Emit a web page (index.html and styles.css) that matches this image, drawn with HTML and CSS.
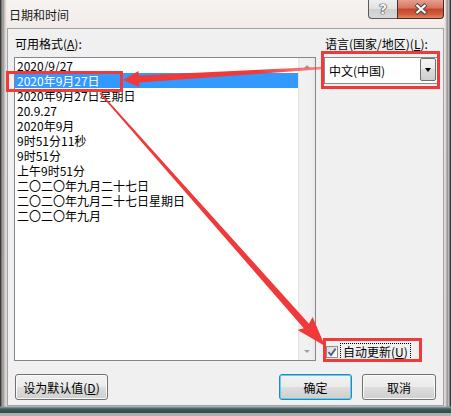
FILE: index.html
```html
<!DOCTYPE html>
<html lang="zh-CN">
<head>
<meta charset="utf-8">
<title>日期和时间</title>
<link rel="stylesheet" href="styles.css">
</head>
<body>
<div class="window">
  <div class="titlebar">
    <div class="title">日期和时间</div>
    <div class="caption">
      <div class="cap-help"><span class="q">?</span></div>
      <div class="cap-close">
        <svg width="16" height="12" viewBox="0 0 16 12"><path d="M3 1.5 L13 10.5 M13 1.5 L3 10.5" fill="none" stroke="#4a4a4a" stroke-width="4.2"/><path d="M3.5 2 L12.5 10 M12.5 2 L3.5 10" fill="none" stroke="#ffffff" stroke-width="2.2"/></svg>
      </div>
    </div>
  </div>
  <div class="client">
    <div class="main">
      <div class="col-left">
        <div class="label">可用格式(<u>A</u>):</div>
        <div class="listbox">
          <div class="items">
            <div class="item">2020/9/27</div>
            <div class="item selected">2020年9月27日</div>
            <div class="item">2020年9月27日星期日</div>
            <div class="item">20.9.27</div>
            <div class="item">2020年9月</div>
            <div class="item">9时51分11秒</div>
            <div class="item">9时51分</div>
            <div class="item">上午9时51分</div>
            <div class="item">二〇二〇年九月二十七日</div>
            <div class="item">二〇二〇年九月二十七日星期日</div>
            <div class="item">二〇二〇年九月</div>
          </div>
          <div class="scrollbar">
            <div class="sb-btn"><span class="tri-up"></span></div>
            <div class="sb-btn"><span class="tri-down"></span></div>
          </div>
        </div>
      </div>
      <div class="col-right">
        <div class="label">语言(国家/地区)(<u>L</u>):</div>
        <div class="combo">
          <div class="combo-text">中文(中国)</div>
          <div class="combo-btn"><span class="tri-black"></span></div>
        </div>
        <div class="check-row">
          <div class="checkbox">
            <svg width="10" height="10" viewBox="0 0 10 10"><path d="M1.5 5.2 L4 8 L8.6 1.6" fill="none" stroke="#4d6185" stroke-width="1.8"/></svg>
          </div>
          <div class="check-label">自动更新(<u>U</u>)</div>
        </div>
      </div>
    </div>
    <div class="bottom">
      <div class="btn btn-default">设为默认值(<u>D</u>)</div>
      <div class="btn-group">
        <div class="btn btn-ok">确定</div>
        <div class="btn btn-cancel">取消</div>
      </div>
    </div>
  </div>
  <svg class="annot" width="451" height="416" viewBox="0 0 451 416">
    <defs>
      <linearGradient id="g1" x1="322" y1="0" x2="139" y2="0" gradientUnits="userSpaceOnUse">
        <stop offset="0" stop-color="#f03a3a" stop-opacity="0.55"/>
        <stop offset="0.35" stop-color="#f03a3a" stop-opacity="1"/>
        <stop offset="1" stop-color="#f03a3a" stop-opacity="1"/>
      </linearGradient>
    </defs>
    <rect x="7.5" y="72.5" width="114" height="18" fill="none" stroke="#f03a3a" stroke-width="3"/>
    <rect x="322.5" y="52.5" width="116" height="35" fill="none" stroke="#f03a3a" stroke-width="3"/>
    <rect x="324.5" y="339.5" width="96" height="21" fill="none" stroke="#f03a3a" stroke-width="3"/>
    <polygon fill="url(#g1)" points="322,66.8 138.8,75.6 138.5,71 123,80 139.5,87.3 139.2,82.6 322,69.2"/>
    <polygon fill="#f03a3a" points="99.4,93.5 303.8,328.3 297.6,330.1 325,346 312.6,316.9 309,323.7 100.6,92.5"/>
  </svg>
</div>
</body>
</html>
```

FILE: styles.css
```css
* { box-sizing: border-box; }
html, body { margin: 0; padding: 0; }
body {
  width: 451px;
  height: 416px;
  overflow: hidden;
  font-family: "Noto Sans CJK SC", "Microsoft YaHei", sans-serif;
  font-size: 12px;
  color: #000;
}
u { text-decoration: underline; text-underline-offset: 1px; }

.window {
  position: relative;
  width: 451px;
  height: 416px;
  padding: 0 7px 10px;
  display: flex;
  flex-direction: column;
  background:
    linear-gradient(to top, #a9b1b1 0, #a9b1b1 3px, #2e4a4b 3px, #3f5b5c 7px, #8d9c9c 9px, rgba(0,0,0,0) 10px),
    linear-gradient(to right, #3c3c3c 0, #3c3c3c 1px, #b3b0ae 2px, #8f8d8c 3px, #d6d1ce 5px, rgba(0,0,0,0) 7px),
    linear-gradient(to left, #3c3c3c 0, #3c3c3c 1px, #c9c5c2 2px, #8f8d8c 4px, #d6d1ce 5px, rgba(0,0,0,0) 7px),
    linear-gradient(to bottom, #f7f3f1 0, #f1ece9 28px, #e3dfdc 200px, #d9d5d3 416px);
}

.titlebar {
  height: 28px;
  display: flex;
  align-items: flex-start;
}
.title {
  margin: 7px 0 0 2px;
  line-height: 15px;
  color: #1a1a1a;
}
.caption {
  margin-left: auto;
  display: flex;
  height: 19px;
}
.cap-help {
  width: 29px;
  height: 19px;
  border: 1px solid #5a5a5a;
  border-top: none;
  border-right: none;
  border-radius: 0 0 0 4px;
  background: linear-gradient(#eeeeee 0, #e2e2e2 50%, #cfcfcf 50%, #d8d8d8 100%);
  display: flex;
  align-items: center;
  justify-content: center;
}
.q {
  font-family: "DejaVu Sans", sans-serif;
  font-weight: bold;
  font-size: 14px;
  line-height: 14px;
  color: #f4f4f4;
  text-shadow: 0 0 1px #333, 0 0 1px #333, 0 0 1px #333;
}
.cap-close {
  width: 47px;
  height: 19px;
  border: 1px solid #4a2a24;
  border-top: none;
  border-radius: 0 0 4px 0;
  background: linear-gradient(#e3a08f 0, #d8735e 45%, #c4432a 50%, #d15d3e 80%, #e08a63 100%);
  display: flex;
  align-items: center;
  justify-content: center;
}

.client {
  flex: 1;
  background: #f0f0f0;
  border: 1px solid #a3a3a3;
  padding: 7px 5px 5px 6px;
  display: flex;
  flex-direction: column;
}
.main {
  display: flex;
  gap: 8px;
}
.label {
  height: 15px;
  line-height: 15px;
  margin-bottom: 6px;
  padding-left: 1px;
  white-space: nowrap;
}
.col-left { width: 302px; }
.listbox {
  height: 304px;
  border: 1px solid #828790;
  background: #fff;
  display: flex;
}
.items { flex: 1; }
.item {
  height: 15px;
  line-height: 15px;
  padding-left: 2px;
  white-space: nowrap;
}
.item.selected { background: #3399ff; color: #fff; }
.scrollbar {
  width: 17px;
  display: flex;
  flex-direction: column;
  justify-content: space-between;
  background: linear-gradient(to right, #e4e4e4 0, #f2f2f2 2px, #efefef 14px, #e7e7e7 17px);
}
.sb-btn {
  height: 17px;
  display: flex;
  align-items: center;
  justify-content: center;
}
.tri-up {
  width: 0; height: 0;
  border-left: 3px solid transparent;
  border-right: 3px solid transparent;
  border-bottom: 3px solid #a0a0a0;
}
.tri-down {
  width: 0; height: 0;
  border-left: 3.5px solid transparent;
  border-right: 3.5px solid transparent;
  border-top: 3.5px solid #a0a0a0;
}

.col-right {
  width: 114px;
  display: flex;
  flex-direction: column;
}
.combo {
  height: 27px;
  border: 1px solid #8a8a8a;
  background: #fff;
  display: flex;
  align-items: flex-start;
}
.combo-text {
  flex: 1;
  line-height: 25px;
  padding-left: 4px;
  white-space: nowrap;
}
.combo-btn {
  width: 16px;
  height: 23px;
  margin-right: 1px;
  border: 1px solid #707070;
  border-radius: 2px;
  background: linear-gradient(#f3f3f3 0, #ebebeb 50%, #dcdcdc 50%, #d0d0d0 100%);
  display: flex;
  align-items: center;
  justify-content: center;
}
.tri-black {
  width: 0; height: 0;
  border-left: 3.5px solid transparent;
  border-right: 3.5px solid transparent;
  border-top: 4px solid #000;
}
.check-row {
  margin-top: auto;
  margin-bottom: 1px;
  height: 17px;
  display: flex;
  align-items: center;
}
.checkbox {
  width: 12px;
  height: 12px;
  margin-left: 2px;
  border: 1px solid #8f8f8f;
  background: linear-gradient(135deg, #d6d6d6 0, #f4f4f4 70%, #ffffff 100%);
  display: flex;
  align-items: center;
  justify-content: center;
}
.checkbox svg { display: block; }
.check-label {
  margin-left: 2px;
  height: 17px;
  line-height: 15px;
  padding: 0 2px;
  border: 1px dotted #000;
  white-space: nowrap;
}

.bottom {
  margin-top: 13px;
  height: 26px;
  display: flex;
  justify-content: space-between;
}
.btn {
  height: 26px;
  border: 1px solid #707070;
  border-radius: 3px;
  background: linear-gradient(#f2f2f2 0, #ebebeb 50%, #dddddd 50%, #cfcfcf 100%);
  box-shadow: inset 0 0 0 1px #fbfbfb;
  display: flex;
  align-items: center;
  justify-content: center;
  line-height: 15px;
  white-space: nowrap;
}
.btn-default { width: 93px; margin-left: 1px; }
.btn-group { display: flex; gap: 10px; margin-right: 2px; }
.btn-ok {
  width: 73px;
  border-color: #3c7fb1;
  box-shadow: inset 0 0 0 1px #48d8f8;
}
.btn-cancel { width: 74px; }

.annot {
  position: absolute;
  left: 0;
  top: 0;
  pointer-events: none;
}
```
